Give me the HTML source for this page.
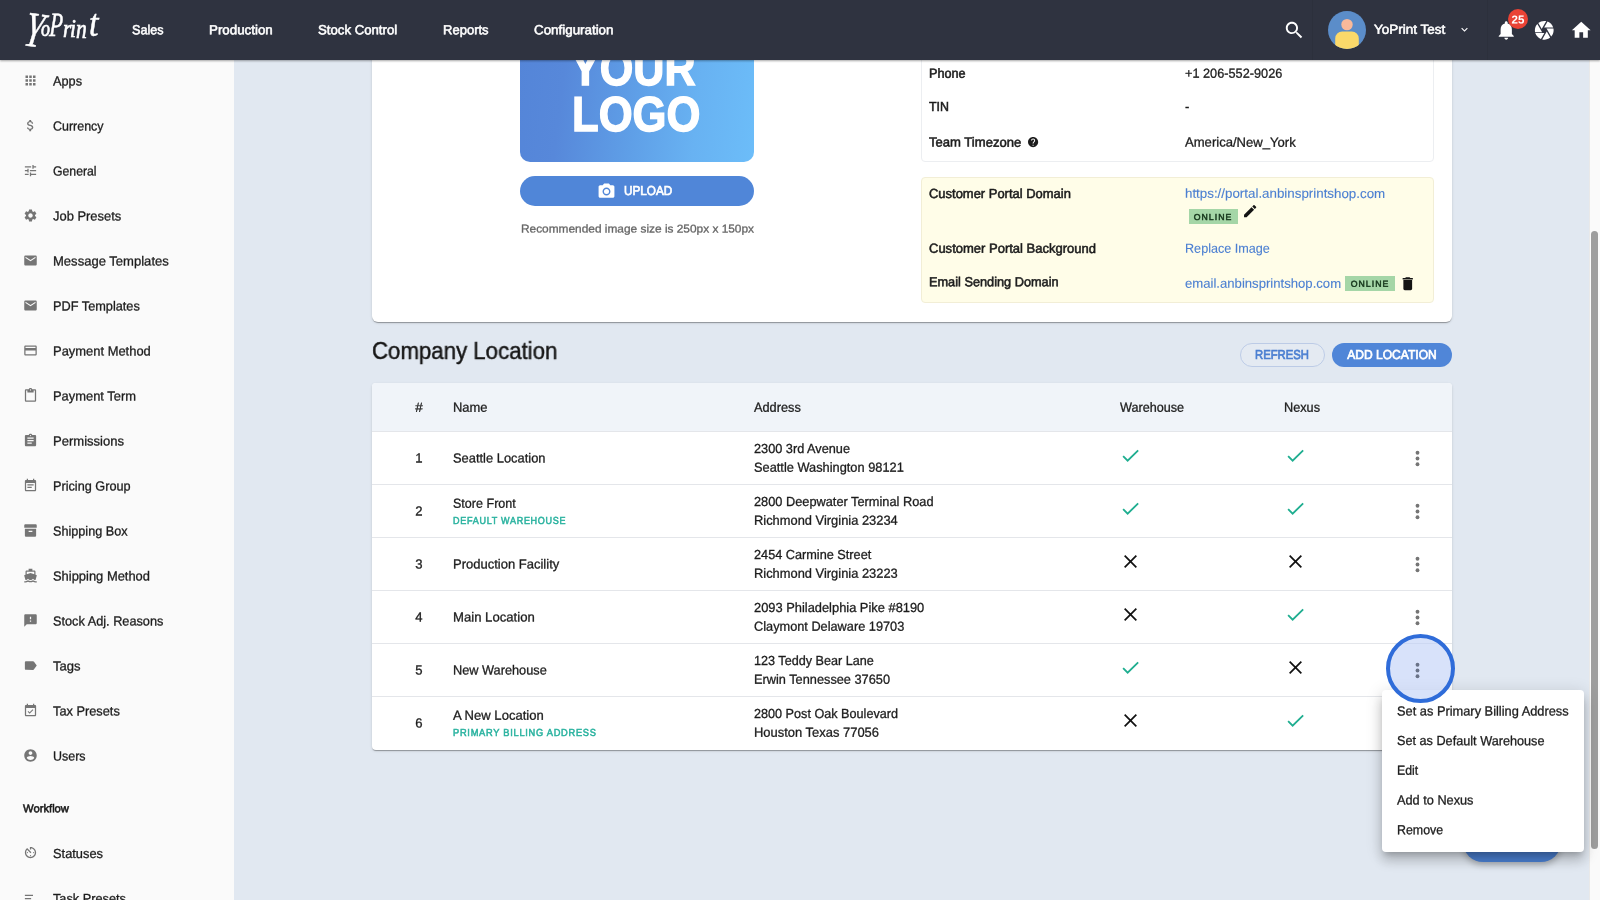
<!DOCTYPE html>
<html lang="en">
<head>
<meta charset="utf-8">
<title>YoPrint - Configuration</title>
<style>
*{box-sizing:border-box;margin:0;padding:0}
html,body{width:1600px;height:900px;overflow:hidden}
body{position:relative;background:#e1e8f1;font-family:"Liberation Sans",Arial,sans-serif;font-size:13.125px;color:#1c1c1c}
.ly{position:absolute;left:0;top:0;width:1600px;height:900px;overflow:hidden;pointer-events:none;will-change:transform}
.bx{position:absolute}
.tx{position:absolute;white-space:nowrap;height:20px;line-height:20px}
.ic{position:absolute;display:block}
</style>
</head>
<body>
<div class="ly" id="main" style="z-index:1">
<div class="bx" style="left:372px;top:-40px;width:1080px;height:361.5px;background:#fff;border-radius:6px;box-shadow:0 2px 1px -1px rgba(0,0,0,.2),0 1px 1px 0 rgba(0,0,0,.14),0 1px 3px 0 rgba(0,0,0,.12)"></div>
<div class="bx" style="left:520px;top:22px;width:234px;height:140px;border-radius:10px;background:linear-gradient(97deg,#5485d8 0%,#5788da 20%,#5f9fe7 50%,#68b2f2 75%,#6cbdf9 100%)"></div>
<div class="tx" style="font-size:49px;top:58px;left:570.80px;transform-origin:0 50%;transform:translateY(0.40px) rotate(.03deg) scaleX(0.8801);color:#fff;font-weight:bold;-webkit-text-stroke:1.4px #fff;">YOUR</div>
<div class="tx" style="font-size:49px;top:103px;left:571.80px;transform-origin:0 50%;transform:translateY(0.50px) rotate(.03deg) scaleX(0.8899);color:#fff;font-weight:bold;-webkit-text-stroke:1.4px #fff;">LOGO</div>
<div class="bx" style="left:520px;top:176px;width:234px;height:30px;border-radius:15px;background:#5086d8"></div>
<svg class="ic" style="left:597.35px;top:181.65px" width="19" height="19" viewBox="0 0 24 24" fill="#fff"><circle cx="12" cy="12" r="3.2"/><path d="M9 2L7.170 4H4c-1.1 0-2 .9-2 2v12c0 1.1.9 2 2 2h16c1.1 0 2-.9 2-2V6c0-1.1-.9-2-2-2h-3.170L15 2H9zm3 15c-2.760 0-5-2.240-5-5s2.240-5 5-5 5 2.240 5 5-2.240 5-5 5z"/></svg>
<div class="tx" style="font-size:13px;top:181px;left:624.20px;transform-origin:0 50%;transform:translateY(0.10px) rotate(.03deg) scaleX(0.9033);color:#fff;-webkit-text-stroke:0.7px;">UPLOAD</div>
<div class="tx" style="font-size:11.25px;top:218px;left:520.70px;transform-origin:0 50%;transform:translateY(0.50px) rotate(.03deg) scaleX(1.0555);color:#666;-webkit-text-stroke:0.3px;">Recommended image size is 250px x 150px</div>
<div class="bx" style="left:921px;top:-20px;width:512.5px;height:181.5px;border:1px solid #eceef1;border-radius:4px;background:#fff"></div>
<div class="tx" style="font-size:13.125px;top:63px;left:929.30px;transform-origin:0 50%;transform:translateY(0.80px) rotate(.03deg) scaleX(0.9651);-webkit-text-stroke:0.55px;">Phone</div>
<div class="tx" style="font-size:13.125px;top:63px;left:1184.80px;transform-origin:0 50%;transform:translateY(0.80px) rotate(.03deg) scaleX(0.9707);-webkit-text-stroke:0.3px;">+1 206-552-9026</div>
<div class="tx" style="font-size:13.125px;top:97px;left:929.30px;transform-origin:0 50%;transform:translateY(0.10px) rotate(.03deg) scaleX(0.9467);-webkit-text-stroke:0.55px;">TIN</div>
<div class="tx" style="font-size:13.125px;top:97px;left:1184.80px;transform-origin:0 50%;transform:translateY(0.10px) rotate(.03deg) scaleX(1.0000);-webkit-text-stroke:0.3px;">-</div>
<div class="tx" style="font-size:13.125px;top:132px;left:929.30px;transform-origin:0 50%;transform:translateY(0.60px) rotate(.03deg) scaleX(0.9973);-webkit-text-stroke:0.55px;">Team Timezone</div>
<svg class="ic" style="left:1026.70px;top:136.20px;" width="12.2" height="12.2" viewBox="0 0 24 24" fill="#1c1c1c" fill-rule="evenodd"><path d="M12 2C6.48 2 2 6.48 2 12s4.48 10 10 10 10-4.48 10-10S17.520 2 12 2zm1 17h-2v-2h2v2zm2.070-7.750l-.9.92C13.450 12.9 13 13.5 13 15h-2v-.5c0-1.1.45-2.1 1.170-2.830l1.240-1.260c.37-.36.59-.86.59-1.410 0-1.1-.9-2-2-2s-2 .9-2 2H8c0-2.210 1.790-4 4-4s4 1.790 4 4c0 .88-.36 1.680-.930 2.250z"/></svg>
<div class="tx" style="font-size:13.125px;top:132px;left:1184.80px;transform-origin:0 50%;transform:translateY(0.60px) rotate(.03deg) scaleX(0.9973);-webkit-text-stroke:0.3px;">America/New_York</div>
<div class="bx" style="left:921px;top:176.5px;width:512.5px;height:126px;border:1px solid #f2eed6;border-radius:4px;background:#fffde8"></div>
<div class="tx" style="font-size:13.125px;top:184px;left:929.30px;transform-origin:0 50%;transform:translateY(0.00px) rotate(.03deg) scaleX(0.9886);-webkit-text-stroke:0.55px;">Customer Portal Domain</div>
<div class="tx" style="font-size:13.125px;top:183px;left:1185.00px;transform-origin:0 50%;transform:translateY(0.80px) rotate(.03deg) scaleX(1.0175);color:#4b7fd1;-webkit-text-stroke:0.12px;">https://portal.anbinsprintshop.com</div>
<div class="bx" style="left:1188.5px;top:209.1px;width:49.4px;height:14.7px;background:#a5d6a7"></div>
<div class="tx" style="font-size:8.6px;top:206px;left:713.00px;width:1000px;text-align:center;transform-origin:50% 50%;transform:translateY(0.90px) rotate(.03deg) scaleX(1.0158);color:#17381d;-webkit-text-stroke:0.5px;letter-spacing:1px;">ONLINE</div>
<svg class="ic" style="left:1241.85px;top:202.85px;" width="16.3" height="16.3" viewBox="0 0 24 24" fill="#141414" fill-rule="evenodd"><path d="M3 17.25V21h3.750L17.810 9.940l-3.750-3.750L3 17.250zM20.710 7.040c.39-.39.39-1.020 0-1.410l-2.340-2.340c-.39-.39-1.020-.39-1.410 0l-1.830 1.830 3.750 3.750 1.830-1.830z"/></svg>
<div class="tx" style="font-size:13.125px;top:238px;left:929.30px;transform-origin:0 50%;transform:translateY(0.80px) rotate(.03deg) scaleX(0.9921);-webkit-text-stroke:0.55px;">Customer Portal Background</div>
<div class="tx" style="font-size:13.125px;top:238px;left:1185.00px;transform-origin:0 50%;transform:translateY(0.80px) rotate(.03deg) scaleX(0.9627);color:#4b7fd1;-webkit-text-stroke:0.12px;">Replace Image</div>
<div class="tx" style="font-size:13.125px;top:272px;left:929.30px;transform-origin:0 50%;transform:translateY(0.30px) rotate(.03deg) scaleX(0.9718);-webkit-text-stroke:0.55px;">Email Sending Domain</div>
<div class="tx" style="font-size:13.125px;top:273px;left:1185.00px;transform-origin:0 50%;transform:translateY(0.80px) rotate(.03deg) scaleX(1.0010);color:#4b7fd1;-webkit-text-stroke:0.12px;">email.anbinsprintshop.com</div>
<div class="bx" style="left:1345.2px;top:276.15px;width:49.7px;height:14.7px;background:#a5d6a7"></div>
<div class="tx" style="font-size:8.6px;top:273px;left:869.60px;width:1000px;text-align:center;transform-origin:50% 50%;transform:translateY(0.80px) rotate(.03deg) scaleX(1.0158);color:#17381d;-webkit-text-stroke:0.5px;letter-spacing:1px;">ONLINE</div>
<svg class="ic" style="left:1398.80px;top:274.85px;" width="17.5" height="17.5" viewBox="0 0 24 24" fill="#141414" fill-rule="evenodd"><path d="M6 19c0 1.1.9 2 2 2h8c1.1 0 2-.9 2-2V7H6v12zM19 4h-3.500l-1-1h-5l-1 1H5v2h14V4z"/></svg>
<div class="tx" style="font-size:23px;top:341px;left:372.20px;transform-origin:0 50%;transform:translateY(0.00px) rotate(.03deg) scaleX(0.9666);color:#161616;-webkit-text-stroke:0.45px;">Company Location</div>
<div class="bx" style="left:1240px;top:343px;width:84.7px;height:24px;border:1px solid #bccbe6;border-radius:12px;background:rgba(255,255,255,.12)"></div>
<div class="tx" style="font-size:13px;top:344px;left:782.00px;width:1000px;text-align:center;transform-origin:50% 50%;transform:translateY(0.90px) rotate(.03deg) scaleX(0.8692);color:#4b7fd1;-webkit-text-stroke:0.7px;">REFRESH</div>
<div class="bx" style="left:1332px;top:343px;width:120px;height:24px;border-radius:12px;background:#5086d8"></div>
<div class="tx" style="font-size:13px;top:344px;left:892.00px;width:1000px;text-align:center;transform-origin:50% 50%;transform:translateY(0.90px) rotate(.03deg) scaleX(0.9258);color:#fff;-webkit-text-stroke:0.7px;">ADD LOCATION</div>
<div class="bx" style="left:372px;top:383px;width:1080px;height:367px;background:#fff;border-radius:4px;box-shadow:0 2px 1px -1px rgba(0,0,0,.2),0 1px 1px 0 rgba(0,0,0,.14),0 1px 3px 0 rgba(0,0,0,.12)"></div>
<div class="bx" style="left:372px;top:383px;width:1080px;height:48px;background:#f0f4f9;border-radius:4px 4px 0 0"></div>
<div class="tx" style="font-size:13.125px;top:397px;left:-80.75px;width:1000px;text-align:center;transform-origin:50% 50%;transform:translateY(0.65px) rotate(.03deg) scaleX(1.0278);-webkit-text-stroke:0.3px;">#</div>
<div class="tx" style="font-size:13.125px;top:397px;left:452.90px;transform-origin:0 50%;transform:translateY(0.65px) rotate(.03deg) scaleX(0.9862);-webkit-text-stroke:0.3px;">Name</div>
<div class="tx" style="font-size:13.125px;top:397px;left:754.25px;transform-origin:0 50%;transform:translateY(0.65px) rotate(.03deg) scaleX(0.9721);-webkit-text-stroke:0.3px;">Address</div>
<div class="tx" style="font-size:13.125px;top:397px;left:1119.60px;transform-origin:0 50%;transform:translateY(0.65px) rotate(.03deg) scaleX(0.9630);-webkit-text-stroke:0.3px;">Warehouse</div>
<div class="tx" style="font-size:13.125px;top:397px;left:1284.20px;transform-origin:0 50%;transform:translateY(0.65px) rotate(.03deg) scaleX(0.9685);-webkit-text-stroke:0.3px;">Nexus</div>
<div class="bx" style="left:372px;top:431px;width:1080px;height:1px;background:#e4e6ea"></div>
<div class="tx" style="font-size:13.125px;top:448px;left:-81.00px;width:1000px;text-align:center;transform-origin:50% 50%;transform:translateY(0.40px) rotate(.03deg) scaleX(1.0000);-webkit-text-stroke:0.3px;">1</div>
<div class="tx" style="font-size:13.125px;top:448px;left:452.90px;transform-origin:0 50%;transform:translateY(0.40px) rotate(.03deg) scaleX(0.9837);-webkit-text-stroke:0.3px;">Seattle Location</div>
<div class="tx" style="font-size:13.125px;top:439px;left:754.25px;transform-origin:0 50%;transform:translateY(0.00px) rotate(.03deg) scaleX(0.9706);-webkit-text-stroke:0.3px;">2300 3rd Avenue</div>
<div class="tx" style="font-size:13.125px;top:457px;left:754.25px;transform-origin:0 50%;transform:translateY(0.70px) rotate(.03deg) scaleX(0.9769);-webkit-text-stroke:0.3px;">Seattle Washington 98121</div>
<svg class="ic" style="left:1119.10px;top:443.80px" width="23" height="23" viewBox="0 0 24 24" fill="none" stroke="#1fae90" stroke-width="1.9"><path d="M4.300 12.700L9 17.400 20 6.600"/></svg>
<svg class="ic" style="left:1283.70px;top:443.80px" width="23" height="23" viewBox="0 0 24 24" fill="none" stroke="#1fae90" stroke-width="1.9"><path d="M4.300 12.700L9 17.400 20 6.600"/></svg>
<svg class="ic" style="left:1406.30px;top:446.50px" width="23" height="23" viewBox="0 0 24 24" fill="#757575"><circle cx="12" cy="6" r="2"/><circle cx="12" cy="12" r="2"/><circle cx="12" cy="18" r="2"/></svg>
<div class="bx" style="left:372px;top:484px;width:1080px;height:1px;background:#e4e6ea"></div>
<div class="tx" style="font-size:13.125px;top:501px;left:-81.00px;width:1000px;text-align:center;transform-origin:50% 50%;transform:translateY(0.40px) rotate(.03deg) scaleX(1.0000);-webkit-text-stroke:0.3px;">2</div>
<div class="tx" style="font-size:13.125px;top:493px;left:452.90px;transform-origin:0 50%;transform:translateY(0.80px) rotate(.03deg) scaleX(0.9569);-webkit-text-stroke:0.3px;">Store Front</div>
<div class="tx" style="font-size:10.2px;top:510px;left:452.90px;transform-origin:0 50%;transform:translateY(0.55px) rotate(.03deg) scaleX(0.8868);color:#2bb3a0;-webkit-text-stroke:0.55px;letter-spacing:.8px;">DEFAULT WAREHOUSE</div>
<div class="tx" style="font-size:13.125px;top:492px;left:754.25px;transform-origin:0 50%;transform:translateY(0.00px) rotate(.03deg) scaleX(0.9748);-webkit-text-stroke:0.3px;">2800 Deepwater Terminal Road</div>
<div class="tx" style="font-size:13.125px;top:510px;left:754.25px;transform-origin:0 50%;transform:translateY(0.70px) rotate(.03deg) scaleX(0.9829);-webkit-text-stroke:0.3px;">Richmond Virginia 23234</div>
<svg class="ic" style="left:1119.10px;top:496.80px" width="23" height="23" viewBox="0 0 24 24" fill="none" stroke="#1fae90" stroke-width="1.9"><path d="M4.300 12.700L9 17.400 20 6.600"/></svg>
<svg class="ic" style="left:1283.70px;top:496.80px" width="23" height="23" viewBox="0 0 24 24" fill="none" stroke="#1fae90" stroke-width="1.9"><path d="M4.300 12.700L9 17.400 20 6.600"/></svg>
<svg class="ic" style="left:1406.30px;top:499.50px" width="23" height="23" viewBox="0 0 24 24" fill="#757575"><circle cx="12" cy="6" r="2"/><circle cx="12" cy="12" r="2"/><circle cx="12" cy="18" r="2"/></svg>
<div class="bx" style="left:372px;top:537px;width:1080px;height:1px;background:#e4e6ea"></div>
<div class="tx" style="font-size:13.125px;top:554px;left:-81.00px;width:1000px;text-align:center;transform-origin:50% 50%;transform:translateY(0.40px) rotate(.03deg) scaleX(1.0000);-webkit-text-stroke:0.3px;">3</div>
<div class="tx" style="font-size:13.125px;top:554px;left:452.90px;transform-origin:0 50%;transform:translateY(0.40px) rotate(.03deg) scaleX(0.9920);-webkit-text-stroke:0.3px;">Production Facility</div>
<div class="tx" style="font-size:13.125px;top:545px;left:754.25px;transform-origin:0 50%;transform:translateY(0.00px) rotate(.03deg) scaleX(0.9693);-webkit-text-stroke:0.3px;">2454 Carmine Street</div>
<div class="tx" style="font-size:13.125px;top:563px;left:754.25px;transform-origin:0 50%;transform:translateY(0.70px) rotate(.03deg) scaleX(0.9829);-webkit-text-stroke:0.3px;">Richmond Virginia 23223</div>
<svg class="ic" style="left:1119.20px;top:549.90px" width="23" height="23" viewBox="0 0 24 24" fill="none" stroke="#111" stroke-width="1.8"><path d="M5.900 5.900L18.100 18.100M18.100 5.900L5.900 18.100"/></svg>
<svg class="ic" style="left:1283.80px;top:549.90px" width="23" height="23" viewBox="0 0 24 24" fill="none" stroke="#111" stroke-width="1.8"><path d="M5.900 5.900L18.100 18.100M18.100 5.900L5.900 18.100"/></svg>
<svg class="ic" style="left:1406.30px;top:552.50px" width="23" height="23" viewBox="0 0 24 24" fill="#757575"><circle cx="12" cy="6" r="2"/><circle cx="12" cy="12" r="2"/><circle cx="12" cy="18" r="2"/></svg>
<div class="bx" style="left:372px;top:590px;width:1080px;height:1px;background:#e4e6ea"></div>
<div class="tx" style="font-size:13.125px;top:607px;left:-81.00px;width:1000px;text-align:center;transform-origin:50% 50%;transform:translateY(0.40px) rotate(.03deg) scaleX(1.0000);-webkit-text-stroke:0.3px;">4</div>
<div class="tx" style="font-size:13.125px;top:607px;left:452.90px;transform-origin:0 50%;transform:translateY(0.40px) rotate(.03deg) scaleX(1.0015);-webkit-text-stroke:0.3px;">Main Location</div>
<div class="tx" style="font-size:13.125px;top:598px;left:754.25px;transform-origin:0 50%;transform:translateY(0.00px) rotate(.03deg) scaleX(0.9814);-webkit-text-stroke:0.3px;">2093 Philadelphia Pike #8190</div>
<div class="tx" style="font-size:13.125px;top:616px;left:754.25px;transform-origin:0 50%;transform:translateY(0.70px) rotate(.03deg) scaleX(0.9726);-webkit-text-stroke:0.3px;">Claymont Delaware 19703</div>
<svg class="ic" style="left:1119.20px;top:602.90px" width="23" height="23" viewBox="0 0 24 24" fill="none" stroke="#111" stroke-width="1.8"><path d="M5.900 5.900L18.100 18.100M18.100 5.900L5.900 18.100"/></svg>
<svg class="ic" style="left:1283.70px;top:602.80px" width="23" height="23" viewBox="0 0 24 24" fill="none" stroke="#1fae90" stroke-width="1.9"><path d="M4.300 12.700L9 17.400 20 6.600"/></svg>
<svg class="ic" style="left:1406.30px;top:605.50px" width="23" height="23" viewBox="0 0 24 24" fill="#757575"><circle cx="12" cy="6" r="2"/><circle cx="12" cy="12" r="2"/><circle cx="12" cy="18" r="2"/></svg>
<div class="bx" style="left:372px;top:643px;width:1080px;height:1px;background:#e4e6ea"></div>
<div class="tx" style="font-size:13.125px;top:660px;left:-81.00px;width:1000px;text-align:center;transform-origin:50% 50%;transform:translateY(0.40px) rotate(.03deg) scaleX(1.0000);-webkit-text-stroke:0.3px;">5</div>
<div class="tx" style="font-size:13.125px;top:660px;left:452.90px;transform-origin:0 50%;transform:translateY(0.40px) rotate(.03deg) scaleX(0.9723);-webkit-text-stroke:0.3px;">New Warehouse</div>
<div class="tx" style="font-size:13.125px;top:651px;left:754.25px;transform-origin:0 50%;transform:translateY(0.00px) rotate(.03deg) scaleX(0.9626);-webkit-text-stroke:0.3px;">123 Teddy Bear Lane</div>
<div class="tx" style="font-size:13.125px;top:669px;left:754.25px;transform-origin:0 50%;transform:translateY(0.70px) rotate(.03deg) scaleX(0.9735);-webkit-text-stroke:0.3px;">Erwin Tennessee 37650</div>
<svg class="ic" style="left:1119.10px;top:655.80px" width="23" height="23" viewBox="0 0 24 24" fill="none" stroke="#1fae90" stroke-width="1.9"><path d="M4.300 12.700L9 17.400 20 6.600"/></svg>
<svg class="ic" style="left:1283.80px;top:655.90px" width="23" height="23" viewBox="0 0 24 24" fill="none" stroke="#111" stroke-width="1.8"><path d="M5.900 5.900L18.100 18.100M18.100 5.900L5.900 18.100"/></svg>
<div class="bx" style="left:372px;top:696px;width:1080px;height:1px;background:#e4e6ea"></div>
<div class="tx" style="font-size:13.125px;top:713px;left:-81.00px;width:1000px;text-align:center;transform-origin:50% 50%;transform:translateY(0.40px) rotate(.03deg) scaleX(1.0000);-webkit-text-stroke:0.3px;">6</div>
<div class="tx" style="font-size:13.125px;top:705px;left:452.90px;transform-origin:0 50%;transform:translateY(0.80px) rotate(.03deg) scaleX(0.9962);-webkit-text-stroke:0.3px;">A New Location</div>
<div class="tx" style="font-size:10.2px;top:722px;left:452.90px;transform-origin:0 50%;transform:translateY(0.55px) rotate(.03deg) scaleX(0.9102);color:#2bb3a0;-webkit-text-stroke:0.55px;letter-spacing:.8px;">PRIMARY BILLING ADDRESS</div>
<div class="tx" style="font-size:13.125px;top:704px;left:754.25px;transform-origin:0 50%;transform:translateY(0.00px) rotate(.03deg) scaleX(0.9638);-webkit-text-stroke:0.3px;">2800 Post Oak Boulevard</div>
<div class="tx" style="font-size:13.125px;top:722px;left:754.25px;transform-origin:0 50%;transform:translateY(0.70px) rotate(.03deg) scaleX(0.9875);-webkit-text-stroke:0.3px;">Houston Texas 77056</div>
<svg class="ic" style="left:1119.20px;top:708.90px" width="23" height="23" viewBox="0 0 24 24" fill="none" stroke="#111" stroke-width="1.8"><path d="M5.900 5.900L18.100 18.100M18.100 5.900L5.900 18.100"/></svg>
<svg class="ic" style="left:1283.70px;top:708.80px" width="23" height="23" viewBox="0 0 24 24" fill="none" stroke="#1fae90" stroke-width="1.9"><path d="M4.300 12.700L9 17.400 20 6.600"/></svg>
</div>
<div class="ly" id="side" style="z-index:2">
<div class="bx" style="left:0px;top:60px;width:234px;height:840px;background:#fafafa"></div>
<svg class="ic" style="left:22.80px;top:73.00px;" width="15" height="15" viewBox="0 0 24 24" fill="#757575" fill-rule="evenodd"><path d="M4 8h4V4H4v4zm6 12h4v-4h-4v4zm-6 0h4v-4H4v4zm0-6h4v-4H4v4zm6 0h4v-4h-4v4zm6-10v4h4V4h-4zm-6 4h4V4h-4v4zm6 6h4v-4h-4v4zm0 6h4v-4h-4v4z"/></svg>
<div class="tx" style="font-size:13.125px;top:71px;left:52.50px;transform-origin:0 50%;transform:translateY(0.50px) rotate(.03deg) scaleX(0.9702);-webkit-text-stroke:0.3px;">Apps</div>
<svg class="ic" style="left:22.80px;top:118.00px;" width="15" height="15" viewBox="0 0 24 24" fill="#757575" fill-rule="evenodd"><path d="M11.8 10.9c-2.27-.59-3-1.2-3-2.15 0-1.09 1.01-1.85 2.7-1.85 1.78 0 2.44.85 2.5 2.1h2.21c-.07-1.72-1.12-3.3-3.21-3.81V3h-3v2.16c-1.94.42-3.5 1.68-3.5 3.61 0 2.31 1.91 3.46 4.7 4.13 2.5.6 3 1.48 3 2.41 0 .69-.49 1.79-2.7 1.79-2.06 0-2.87-.92-2.98-2.1h-2.2c.12 2.19 1.76 3.42 3.68 3.83V21h3v-2.15c1.95-.37 3.5-1.5 3.5-3.55 0-2.84-2.43-3.81-4.7-4.4z"/></svg>
<div class="tx" style="font-size:13.125px;top:116px;left:52.50px;transform-origin:0 50%;transform:translateY(0.50px) rotate(.03deg) scaleX(0.9514);-webkit-text-stroke:0.3px;">Currency</div>
<svg class="ic" style="left:22.80px;top:163.00px;" width="15" height="15" viewBox="0 0 24 24" fill="#757575" fill-rule="evenodd"><path d="M3 17v2h6v-2H3zM3 5v2h10V5H3zm10 16v-2h8v-2h-8v-2h-2v6h2zM7 9v2H3v2h4v2h2V9H7zm14 4v-2H11v2h10zm-6-4h2V7h4V5h-4V3h-2v6z"/></svg>
<div class="tx" style="font-size:13.125px;top:161px;left:52.50px;transform-origin:0 50%;transform:translateY(0.50px) rotate(.03deg) scaleX(0.9348);-webkit-text-stroke:0.3px;">General</div>
<svg class="ic" style="left:22.80px;top:208.00px;" width="15" height="15" viewBox="0 0 24 24" fill="#757575" fill-rule="evenodd"><path d="M19.14 12.94c.04-.3.06-.61.06-.94 0-.32-.02-.64-.07-.94l2.03-1.58c.18-.14.23-.41.12-.61l-1.92-3.32c-.12-.22-.37-.29-.59-.22l-2.39.96c-.5-.38-1.03-.7-1.62-.94l-.36-2.54c-.04-.24-.24-.41-.48-.41h-3.84c-.24 0-.43.17-.47.41l-.36 2.54c-.59.24-1.13.57-1.62.94l-2.39-.96c-.22-.08-.47 0-.59.22L2.74 8.87c-.12.21-.08.47.12.61l2.03 1.58c-.05.3-.09.63-.09.94s.02.64.07.94l-2.03 1.58c-.18.14-.23.41-.12.61l1.92 3.32c.12.22.37.29.59.22l2.39-.96c.5.38 1.03.7 1.62.94l.36 2.54c.05.24.24.41.48.41h3.84c.24 0 .44-.17.47-.41l.36-2.54c.59-.24 1.13-.56 1.62-.94l2.39.96c.22.08.47 0 .59-.22l1.92-3.32c.12-.22.07-.47-.12-.61l-2.01-1.58zM12 15.6c-1.98 0-3.6-1.62-3.6-3.6s1.62-3.6 3.6-3.6 3.6 1.62 3.6 3.6-1.62 3.6-3.6 3.6z"/></svg>
<div class="tx" style="font-size:13.125px;top:206px;left:52.50px;transform-origin:0 50%;transform:translateY(0.50px) rotate(.03deg) scaleX(0.9851);-webkit-text-stroke:0.3px;">Job Presets</div>
<svg class="ic" style="left:22.80px;top:253.00px;" width="15" height="15" viewBox="0 0 24 24" fill="#757575" fill-rule="evenodd"><path d="M20 4H4c-1.1 0-1.99.9-1.99 2L2 18c0 1.1.9 2 2 2h16c1.1 0 2-.9 2-2V6c0-1.1-.9-2-2-2zm0 4l-8 5-8-5V6l8 5 8-5v2z"/></svg>
<div class="tx" style="font-size:13.125px;top:251px;left:52.50px;transform-origin:0 50%;transform:translateY(0.50px) rotate(.03deg) scaleX(0.9952);-webkit-text-stroke:0.3px;">Message Templates</div>
<svg class="ic" style="left:22.80px;top:298.00px;" width="15" height="15" viewBox="0 0 24 24" fill="#757575" fill-rule="evenodd"><path d="M20 4H4c-1.1 0-1.99.9-1.99 2L2 18c0 1.1.9 2 2 2h16c1.1 0 2-.9 2-2V6c0-1.1-.9-2-2-2zm0 4l-8 5-8-5V6l8 5 8-5v2z"/></svg>
<div class="tx" style="font-size:13.125px;top:296px;left:52.50px;transform-origin:0 50%;transform:translateY(0.50px) rotate(.03deg) scaleX(0.9712);-webkit-text-stroke:0.3px;">PDF Templates</div>
<svg class="ic" style="left:22.80px;top:343.00px;" width="15" height="15" viewBox="0 0 24 24" fill="#757575" fill-rule="evenodd"><path d="M20 4H4c-1.11 0-1.99.89-1.99 2L2 18c0 1.11.89 2 2 2h16c1.11 0 2-.89 2-2V6c0-1.11-.89-2-2-2zm0 14H4v-6h16v6zm0-10H4V6h16v2z"/></svg>
<div class="tx" style="font-size:13.125px;top:341px;left:52.50px;transform-origin:0 50%;transform:translateY(0.50px) rotate(.03deg) scaleX(0.9868);-webkit-text-stroke:0.3px;">Payment Method</div>
<svg class="ic" style="left:22.80px;top:388.00px;" width="15" height="15" viewBox="0 0 24 24" fill="#757575" fill-rule="evenodd"><path d="M19 2h-4.18C14.4.84 13.3 0 12 0c-1.3 0-2.4.84-2.82 2H5c-1.1 0-2 .9-2 2v16c0 1.1.9 2 2 2h14c1.1 0 2-.9 2-2V4c0-1.1-.9-2-2-2zm-7 0c.55 0 1 .45 1 1s-.45 1-1 1-1-.45-1-1 .45-1 1-1zm7 18H5V4h2v3h10V4h2v16z"/></svg>
<div class="tx" style="font-size:13.125px;top:386px;left:52.50px;transform-origin:0 50%;transform:translateY(0.50px) rotate(.03deg) scaleX(0.9848);-webkit-text-stroke:0.3px;">Payment Term</div>
<svg class="ic" style="left:22.80px;top:433.00px;" width="15" height="15" viewBox="0 0 24 24" fill="#757575" fill-rule="evenodd"><path d="M19 3h-4.18C14.4 1.84 13.3 1 12 1c-1.3 0-2.4.84-2.82 2H5c-1.1 0-2 .9-2 2v14c0 1.1.9 2 2 2h14c1.1 0 2-.9 2-2V5c0-1.1-.9-2-2-2zm-7 0c.55 0 1 .45 1 1s-.45 1-1 1-1-.45-1-1 .45-1 1-1zm2 14H7v-2h7v2zm3-4H7v-2h10v2zm0-4H7V7h10v2z"/></svg>
<div class="tx" style="font-size:13.125px;top:431px;left:52.50px;transform-origin:0 50%;transform:translateY(0.50px) rotate(.03deg) scaleX(0.9943);-webkit-text-stroke:0.3px;">Permissions</div>
<svg class="ic" style="left:22.80px;top:478.00px;" width="15" height="15" viewBox="0 0 24 24" fill="#757575" fill-rule="evenodd"><path d="M17 10H7v2h10v-2zm2-7h-1V1h-2v2H8V1H6v2H5c-1.11 0-1.99.9-1.99 2L3 19c0 1.1.89 2 2 2h14c1.1 0 2-.9 2-2V5c0-1.1-.9-2-2-2zm0 16H5V8h14v11zm-5-5H7v2h7v-2z"/></svg>
<div class="tx" style="font-size:13.125px;top:476px;left:52.50px;transform-origin:0 50%;transform:translateY(0.50px) rotate(.03deg) scaleX(0.9681);-webkit-text-stroke:0.3px;">Pricing Group</div>
<svg class="ic" style="left:22.80px;top:523.00px;" width="15" height="15" viewBox="0 0 24 24" fill="#757575" fill-rule="evenodd"><path d="M4 2h16c1.1 0 2 .9 2 2v3.600H2V4c0-1.1.9-2 2-2zM3 9.100h18V20c0 1.1-.9 2-2 2H5c-1.1 0-2-.9-2-2V9.100zM9 12.200v2h6v-2H9z"/></svg>
<div class="tx" style="font-size:13.125px;top:521px;left:52.50px;transform-origin:0 50%;transform:translateY(0.50px) rotate(.03deg) scaleX(0.9655);-webkit-text-stroke:0.3px;">Shipping Box</div>
<svg class="ic" style="left:22.80px;top:568.00px;" width="15" height="15" viewBox="0 0 24 24" fill="#757575" fill-rule="evenodd"><path d="M20 21c-1.39 0-2.78-.47-4-1.32-2.44 1.71-5.56 1.71-8 0C6.78 20.53 5.39 21 4 21H2v2h2c1.38 0 2.74-.35 4-.99 2.52 1.29 5.48 1.29 8 0 1.26.65 2.62.99 4 .99h2v-2h-2zM3.95 19H4c1.6 0 3.02-.88 4-2 .98 1.12 2.4 2 4 2s3.02-.88 4-2c.98 1.12 2.4 2 4 2h.05l1.89-6.68c.08-.26.06-.54-.06-.78s-.34-.42-.6-.5L20 10.620V6c0-1.1-.9-2-2-2h-3V1H9v3H6c-1.1 0-2 .9-2 2v4.620l-1.290.420c-.26.08-.48.26-.6.5s-.15.52-.06.78L3.950 19zM6 6h12v3.970L12 8 6 9.970V6z"/></svg>
<div class="tx" style="font-size:13.125px;top:566px;left:52.50px;transform-origin:0 50%;transform:translateY(0.50px) rotate(.03deg) scaleX(0.9857);-webkit-text-stroke:0.3px;">Shipping Method</div>
<svg class="ic" style="left:22.80px;top:613.00px;" width="15" height="15" viewBox="0 0 24 24" fill="#757575" fill-rule="evenodd"><path d="M20 2H4c-1.1 0-1.99.9-1.99 2L2 22l4-4h14c1.1 0 2-.9 2-2V4c0-1.1-.9-2-2-2zm-7 12h-2v-2h2v2zm0-4h-2V6h2v4z"/></svg>
<div class="tx" style="font-size:13.125px;top:611px;left:52.50px;transform-origin:0 50%;transform:translateY(0.50px) rotate(.03deg) scaleX(0.9711);-webkit-text-stroke:0.3px;">Stock Adj. Reasons</div>
<svg class="ic" style="left:22.80px;top:658.00px;" width="15" height="15" viewBox="0 0 24 24" fill="#757575" fill-rule="evenodd"><path d="M17.63 5.84C17.27 5.33 16.67 5 16 5L5 5.010C3.9 5.010 3 5.9 3 7v10c0 1.1.9 1.990 2 1.990L16 19c.67 0 1.27-.33 1.63-.84L22 12l-4.370-6.160z"/></svg>
<div class="tx" style="font-size:13.125px;top:656px;left:52.50px;transform-origin:0 50%;transform:translateY(0.50px) rotate(.03deg) scaleX(0.9963);-webkit-text-stroke:0.3px;">Tags</div>
<svg class="ic" style="left:22.80px;top:703.00px;" width="15" height="15" viewBox="0 0 24 24" fill="#757575" fill-rule="evenodd"><path d="M16.53 11.06L15.47 10l-4.88 4.88-2.12-2.12-1.06 1.06L10.59 17l5.940-5.940zM19 3h-1V1h-2v2H8V1H6v2H5c-1.11 0-1.99.9-1.99 2L3 19c0 1.1.89 2 2 2h14c1.1 0 2-.9 2-2V5c0-1.1-.9-2-2-2zm0 16H5V8h14v11z"/></svg>
<div class="tx" style="font-size:13.125px;top:701px;left:52.50px;transform-origin:0 50%;transform:translateY(0.50px) rotate(.03deg) scaleX(0.9754);-webkit-text-stroke:0.3px;">Tax Presets</div>
<svg class="ic" style="left:22.80px;top:748.00px;" width="15" height="15" viewBox="0 0 24 24" fill="#757575" fill-rule="evenodd"><path d="M12 2C6.48 2 2 6.48 2 12s4.48 10 10 10 10-4.48 10-10S17.520 2 12 2zm0 3c1.66 0 3 1.34 3 3s-1.34 3-3 3-3-1.34-3-3 1.34-3 3-3zm0 14.2c-2.5 0-4.710-1.28-6-3.220.03-1.990 4-3.080 6-3.080 1.990 0 5.970 1.090 6 3.080-1.290 1.940-3.5 3.220-6 3.220z"/></svg>
<div class="tx" style="font-size:13.125px;top:746px;left:52.50px;transform-origin:0 50%;transform:translateY(0.50px) rotate(.03deg) scaleX(0.9523);-webkit-text-stroke:0.3px;">Users</div>
<div class="tx" style="font-size:11.25px;top:798px;left:23.00px;transform-origin:0 50%;transform:translateY(0.30px) rotate(.03deg) scaleX(0.9986);color:#1a1a1a;-webkit-text-stroke:0.55px;">Workflow</div>
<svg class="ic" style="left:22.80px;top:845.30px;" width="15" height="15" viewBox="0 0 24 24" fill="#757575" fill-rule="evenodd"><path d="M11 17c0 .55.45 1 1 1s1-.45 1-1-.45-1-1-1-1 .45-1 1zm0-14v4h2V5.080c3.390.490 6 3.390 6 6.920 0 3.870-3.130 7-7 7s-7-3.130-7-7c0-1.680.590-3.220 1.580-4.420L12 13l1.410-1.410-6.800-6.800v.020C4.420 6.450 3 9.050 3 12c0 4.970 4.020 9 9 9 4.970 0 9-4.030 9-9s-4.030-9-9-9h-1zm7 9c0-.55-.45-1-1-1s-1 .45-1 1 .45 1 1 1 1-.45 1-1zM6 12c0 .55.45 1 1 1s1-.45 1-1-.45-1-1-1-1 .45-1 1z"/></svg>
<div class="tx" style="font-size:13.125px;top:843px;left:52.50px;transform-origin:0 50%;transform:translateY(0.90px) rotate(.03deg) scaleX(0.9801);-webkit-text-stroke:0.3px;">Statuses</div>
<svg class="ic" style="left:22.80px;top:891.00px;" width="15" height="15" viewBox="0 0 24 24" fill="#757575" fill-rule="evenodd"><path d="M3 18h6v-2H3v2zM3 6v2h13V6H3zm0 7h10v-2H3v2z"/></svg>
<div class="tx" style="font-size:13.125px;top:888px;left:52.50px;transform-origin:0 50%;transform:translateY(0.90px) rotate(.03deg) scaleX(0.9727);-webkit-text-stroke:0.3px;">Task Presets</div>
</div>
<div class="ly" id="sb" style="z-index:3">
<div class="bx" style="left:1589px;top:60px;width:11px;height:840px;background:#fafafa;border-left:1px solid #e9e9e9"></div>
<div class="bx" style="left:1591px;top:230.5px;width:7px;height:618px;border-radius:3.5px;background:#9e9e9e"></div>
</div>
<div class="ly" id="fab" style="z-index:4">
<div class="bx" style="left:1462.5px;top:822px;width:98px;height:40px;border-radius:20px;background:#4a7fd1;box-shadow:0 3px 6px rgba(0,0,0,.25)"></div>
</div>
<div class="ly" id="menu" style="z-index:5">
<div class="bx" style="left:1382px;top:689.5px;width:202px;height:162.5px;border-radius:4px;background:#fff;box-shadow:0 5px 6px -3px rgba(0,0,0,.2),0 9px 12px 1px rgba(0,0,0,.14),0 3px 16px 2px rgba(0,0,0,.12)"></div>
<div class="tx" style="font-size:13.125px;top:701px;left:1397.20px;transform-origin:0 50%;transform:translateY(0.40px) rotate(.03deg) scaleX(0.9778);-webkit-text-stroke:0.3px;">Set as Primary Billing Address</div>
<div class="tx" style="font-size:13.125px;top:731px;left:1397.20px;transform-origin:0 50%;transform:translateY(0.10px) rotate(.03deg) scaleX(0.9669);-webkit-text-stroke:0.3px;">Set as Default Warehouse</div>
<div class="tx" style="font-size:13.125px;top:760px;left:1397.20px;transform-origin:0 50%;transform:translateY(0.80px) rotate(.03deg) scaleX(0.9361);-webkit-text-stroke:0.3px;">Edit</div>
<div class="tx" style="font-size:13.125px;top:790px;left:1397.20px;transform-origin:0 50%;transform:translateY(0.50px) rotate(.03deg) scaleX(0.9720);-webkit-text-stroke:0.3px;">Add to Nexus</div>
<div class="tx" style="font-size:13.125px;top:820px;left:1397.20px;transform-origin:0 50%;transform:translateY(0.20px) rotate(.03deg) scaleX(0.9441);-webkit-text-stroke:0.3px;">Remove</div>
</div>
<div class="ly" id="ring" style="z-index:6">
<div class="bx" style="left:1385.5px;top:634.3px;width:69px;height:69px;border-radius:50%;border:4px solid #2f6cd9;background:rgba(190,206,247,.6)"></div>
<svg class="ic" style="left:1406.40px;top:658.70px" width="23" height="23" viewBox="0 0 24 24" fill="#6a7387"><circle cx="12" cy="6" r="2"/><circle cx="12" cy="12" r="2"/><circle cx="12" cy="18" r="2"/></svg>
</div>
<div class="ly" id="hdr" style="z-index:7">
<div class="bx" style="left:0px;top:0px;width:1600px;height:60px;background:#2f3340;box-shadow:0 1px 2px rgba(0,0,0,.35)"></div>
<div id="logo" style="position:absolute;left:0;top:0;color:#fff;font-family:'Liberation Serif','DejaVu Serif',serif;font-style:italic;white-space:nowrap"><span style="position:absolute;left:21.8px;top:2.799999999999997px;font-size:50px;line-height:1;height:50px;-webkit-text-stroke:0.5px #fff;transform-origin:0 45px;transform:rotate(8deg) skewX(-2deg) scaleX(0.66)">Y</span><span style="position:absolute;left:41.3px;top:16.799999999999997px;font-size:23px;line-height:1;height:23px;-webkit-text-stroke:0.7px #fff;transform-origin:0 20px;transform:rotate(0deg) skewX(0deg) scaleX(0.78)">o</span><span style="position:absolute;left:49px;top:8px;font-size:34px;line-height:1;height:34px;-webkit-text-stroke:0.6px #fff;transform-origin:0 30px;transform:rotate(0deg) skewX(-3deg) scaleX(0.64)">P</span><span style="position:absolute;left:62.5px;top:16px;font-size:25px;line-height:1;height:25px;-webkit-text-stroke:0.7px #fff;transform-origin:0 22px;transform:rotate(0deg) skewX(0deg) scaleX(0.85)">r</span><span style="position:absolute;left:70px;top:16px;font-size:25px;line-height:1;height:25px;-webkit-text-stroke:0.7px #fff;transform-origin:0 22px;transform:rotate(0deg) skewX(0deg) scaleX(0.85)">i</span><span style="position:absolute;left:75.6px;top:16.299999999999997px;font-size:27px;line-height:1;height:27px;-webkit-text-stroke:0.7px #fff;transform-origin:0 24px;transform:rotate(0deg) skewX(0deg) scaleX(0.8)">n</span><span style="position:absolute;left:89px;top:3.5px;font-size:38px;line-height:1;height:38px;-webkit-text-stroke:0.5px #fff;transform-origin:0 34px;transform:rotate(0deg) skewX(0deg) scaleX(0.9)">t</span></div>
<div class="tx" style="font-size:13.125px;top:20px;left:131.60px;transform-origin:0 50%;transform:translateY(0.30px) rotate(.03deg) scaleX(0.9605);color:#fff;-webkit-text-stroke:0.55px;">Sales</div>
<div class="tx" style="font-size:13.125px;top:20px;left:208.50px;transform-origin:0 50%;transform:translateY(0.30px) rotate(.03deg) scaleX(1.0177);color:#fff;-webkit-text-stroke:0.55px;">Production</div>
<div class="tx" style="font-size:13.125px;top:20px;left:317.80px;transform-origin:0 50%;transform:translateY(0.30px) rotate(.03deg) scaleX(1.0063);color:#fff;-webkit-text-stroke:0.55px;">Stock Control</div>
<div class="tx" style="font-size:13.125px;top:20px;left:442.50px;transform-origin:0 50%;transform:translateY(0.30px) rotate(.03deg) scaleX(0.9933);color:#fff;-webkit-text-stroke:0.55px;">Reports</div>
<div class="tx" style="font-size:13.125px;top:20px;left:533.60px;transform-origin:0 50%;transform:translateY(0.30px) rotate(.03deg) scaleX(1.0194);color:#fff;-webkit-text-stroke:0.55px;">Configuration</div>
<div class="bx" style="left:1312px;top:0px;width:1px;height:60px;background:#2c303c"></div>
<div class="bx" style="left:1487px;top:0px;width:1px;height:60px;background:#2c303c"></div>
<svg class="ic" style="left:1282.95px;top:18.95px;" width="22.5" height="22.5" viewBox="0 0 24 24" fill="#fff" fill-rule="evenodd"><path d="M15.5 14h-.79l-.28-.27C15.41 12.59 16 11.11 16 9.5 16 5.91 13.09 3 9.5 3S3 5.91 3 9.5 5.91 16 9.5 16c1.61 0 3.09-.59 4.23-1.57l.27.28v.79l5 4.99L20.49 19l-4.99-5zm-6 0C7.01 14 5 11.99 5 9.5S7.01 5 9.5 5 14 7.01 14 9.5 11.99 14 9.5 14z"/></svg>
<svg class="ic" style="left:1328.4px;top:11.1px" width="38" height="38" viewBox="0 0 38 38"><clipPath id="avc"><circle cx="19" cy="19" r="19"/></clipPath><circle cx="19" cy="19" r="19" fill="#5b8dc9"/><g clip-path="url(#avc)"><circle cx="19" cy="13.6" r="5.7" fill="#f9b99a"/><path d="M7.200 40V27.400a7 7 0 0 1 7-7h9.600a7 7 0 0 1 7 7V40z" fill="#fbd96a"/></g></svg>
<div class="tx" style="font-size:13.125px;top:19px;left:1374.00px;transform-origin:0 50%;transform:translateY(0.80px) rotate(.03deg) scaleX(1.0284);color:#fff;-webkit-text-stroke:0.55px;">YoPrint Test</div>
<svg class="ic" style="left:1457.60px;top:22.95px;" width="13" height="13" viewBox="0 0 24 24" fill="#fff" fill-rule="evenodd"><path d="M16.59 8.59L12 13.17 7.41 8.59 6 10l6 6 6-6z"/></svg>
<svg class="ic" style="left:1495.05px;top:19.15px;" width="22.5" height="22.5" viewBox="0 0 24 24" fill="#fff" fill-rule="evenodd"><path d="M12 22c1.1 0 2-.9 2-2h-4c0 1.1.89 2 2 2zm6-6v-5c0-3.07-1.64-5.64-4.5-6.32V4c0-.83-.67-1.5-1.5-1.500s-1.5.67-1.5 1.500v.68C7.63 5.36 6 7.92 6 11v5l-2 2v1h16v-1l-2-2z"/></svg>
<div class="bx" style="left:1507.8px;top:8.8px;width:20.4px;height:20.4px;border-radius:50%;background:#ea4335"></div>
<div class="tx" style="font-size:11.5px;top:9px;left:1018.00px;width:1000px;text-align:center;transform-origin:50% 50%;transform:translateY(0.40px) rotate(.03deg) scaleX(1.0000);color:#fff;font-weight:bold;">25</div>
<svg class="ic" style="left:1532.55px;top:19.25px;" width="22.5" height="22.5" viewBox="0 0 24 24" fill="#fff" fill-rule="evenodd"><path d="M9.4 10.5l4.77-8.26C13.47 2.09 12.75 2 12 2c-2.4 0-4.6.85-6.32 2.25l3.66 6.35.06-.1zM21.54 9c-.92-2.92-3.15-5.26-6-6.340L11.88 9h9.660zm.26 1h-7.490l.29.5 4.760 8.250C21 16.970 22 14.610 22 12c0-.69-.07-1.35-.2-2zM8.540 12l-3.900-6.750C3.010 7.030 2 9.390 2 12c0 .69.07 1.35.2 2h7.490l-1.150-2zm-6.080 3c.92 2.920 3.150 5.260 6 6.340L12.120 15H2.460zm11.270 0l-3.900 6.760c.7.15 1.420.24 2.170.24 2.400 0 4.600-.85 6.320-2.250l-3.660-6.350-.93 1.600z"/></svg>
<svg class="ic" style="left:1570.15px;top:19.25px;" width="22.5" height="22.5" viewBox="0 0 24 24" fill="#fff" fill-rule="evenodd"><path d="M10 20v-6h4v6h5v-8h3L12 3 2 12h3v8z"/></svg>
</div>
</body>
</html>
